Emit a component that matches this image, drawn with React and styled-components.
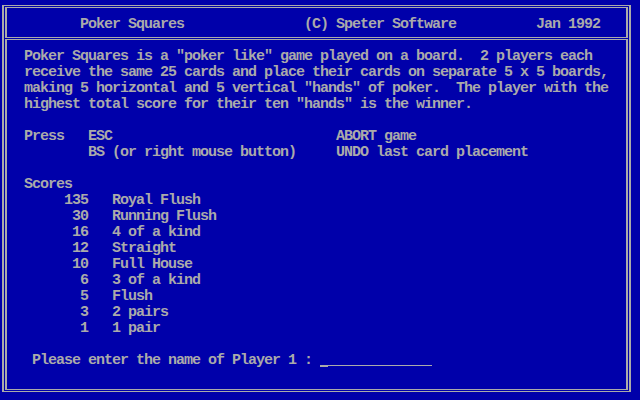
import React from 'react';
import styled, { createGlobalStyle } from 'styled-components';

const GlobalStyle = createGlobalStyle`
  html, body { margin: 0; padding: 0; background: #0000aa; }
`;

const Screen = styled.div`
  width: 640px;
  height: 400px;
  box-sizing: border-box;
  padding: 5px 0 0 2px;
  background: #0000aa;
  color: #aaaaaa;
  font-family: "Liberation Mono", "DejaVu Sans Mono", monospace;
  font-size: 15px;
  font-weight: bold;
  letter-spacing: -1px;
  line-height: 16px;
  overflow: hidden;
`;

const Frame = styled.div`
  width: 629px;
  height: 387px;
  box-sizing: border-box;
  border: solid #aaaaaa;
  border-width: 1px 2px;
  padding: 1px;
  display: flex;
  flex-direction: column;
  gap: 1px;
`;

const Box = styled.div`
  box-sizing: border-box;
  border: solid #aaaaaa;
  border-width: 1px 2px;
`;

const HeaderBox = styled(Box)`
  height: 31px;
  padding: 9px 0 0 73px;
  display: grid;
  grid-template-columns: 224px 232px auto;
  align-content: start;
`;

const BodyBox = styled(Box)`
  flex: 1;
  padding: 9px 0 0 17px;
  display: flex;
  flex-direction: column;
  gap: 16px;
`;

const Para = styled.div`
  display: flex;
  flex-direction: column;
`;

const Line = styled.div`
  height: 16px;
  white-space: pre;
`;

const KeyGrid = styled.div`
  display: grid;
  grid-template-columns: 64px 248px auto;
  grid-auto-rows: 16px;
  white-space: pre;
`;

const ScoreSection = styled.div`
  display: flex;
  flex-direction: column;
`;

const ScoreGrid = styled.div`
  display: grid;
  grid-template-columns: 64px auto;
  grid-auto-rows: 16px;
  column-gap: 24px;
`;

const Points = styled.span`
  justify-self: end;
`;

const Prompt = styled.div`
  display: flex;
  margin-left: 8px;
  height: 16px;
`;

const PromptLabel = styled.span`
  width: 288px;
  white-space: pre;
`;

const Field = styled.div`
  width: 112px;
  box-sizing: border-box;
  padding-top: 12px;
  display: flex;
  align-items: flex-start;
`;

const Cursor = styled.div`
  width: 8px;
  height: 2px;
  background: #aaaaaa;
`;

const Underline = styled.div`
  flex: 1;
  height: 1px;
  background: #aaaaaa;
`;

const intro = [
  'Poker Squares is a "poker like" game played on a board.  2 players each',
  'receive the same 25 cards and place their cards on separate 5 x 5 boards,',
  'making 5 horizontal and 5 vertical "hands" of poker.  The player with the',
  'highest total score for their ten "hands" is the winner.',
];

const keys = [
  ['Press', 'ESC', 'ABORT game'],
  ['', 'BS (or right mouse button)', 'UNDO last card placement'],
];

const scores = [
  [135, 'Royal Flush'],
  [30, 'Running Flush'],
  [16, '4 of a kind'],
  [12, 'Straight'],
  [10, 'Full House'],
  [6, '3 of a kind'],
  [5, 'Flush'],
  [3, '2 pairs'],
  [1, '1 pair'],
];

const App = () => {
  return (
    <>
      <GlobalStyle />
      <Screen>
        <Frame>
          <HeaderBox>
            <span>Poker Squares</span>
            <span>(C) Speter Software</span>
            <span>Jan 1992</span>
          </HeaderBox>
          <BodyBox>
            <Para>
              {intro.map((text, i) => (
                <Line key={i}>{text}</Line>
              ))}
            </Para>
            <KeyGrid>
              {keys.map((row) =>
                row.map((cell, j) => <span key={row[1] + j}>{cell}</span>)
              )}
            </KeyGrid>
            <ScoreSection>
              <Line>Scores</Line>
              <ScoreGrid>
                {scores.map(([pts, hand]) => (
                  <React.Fragment key={hand}>
                    <Points>{pts}</Points>
                    <span>{hand}</span>
                  </React.Fragment>
                ))}
              </ScoreGrid>
            </ScoreSection>
            <Prompt>
              <PromptLabel>Please enter the name of Player 1 : </PromptLabel>
              <Field>
                <Cursor />
                <Underline />
              </Field>
            </Prompt>
          </BodyBox>
        </Frame>
      </Screen>
    </>
  );
};

export default App;
